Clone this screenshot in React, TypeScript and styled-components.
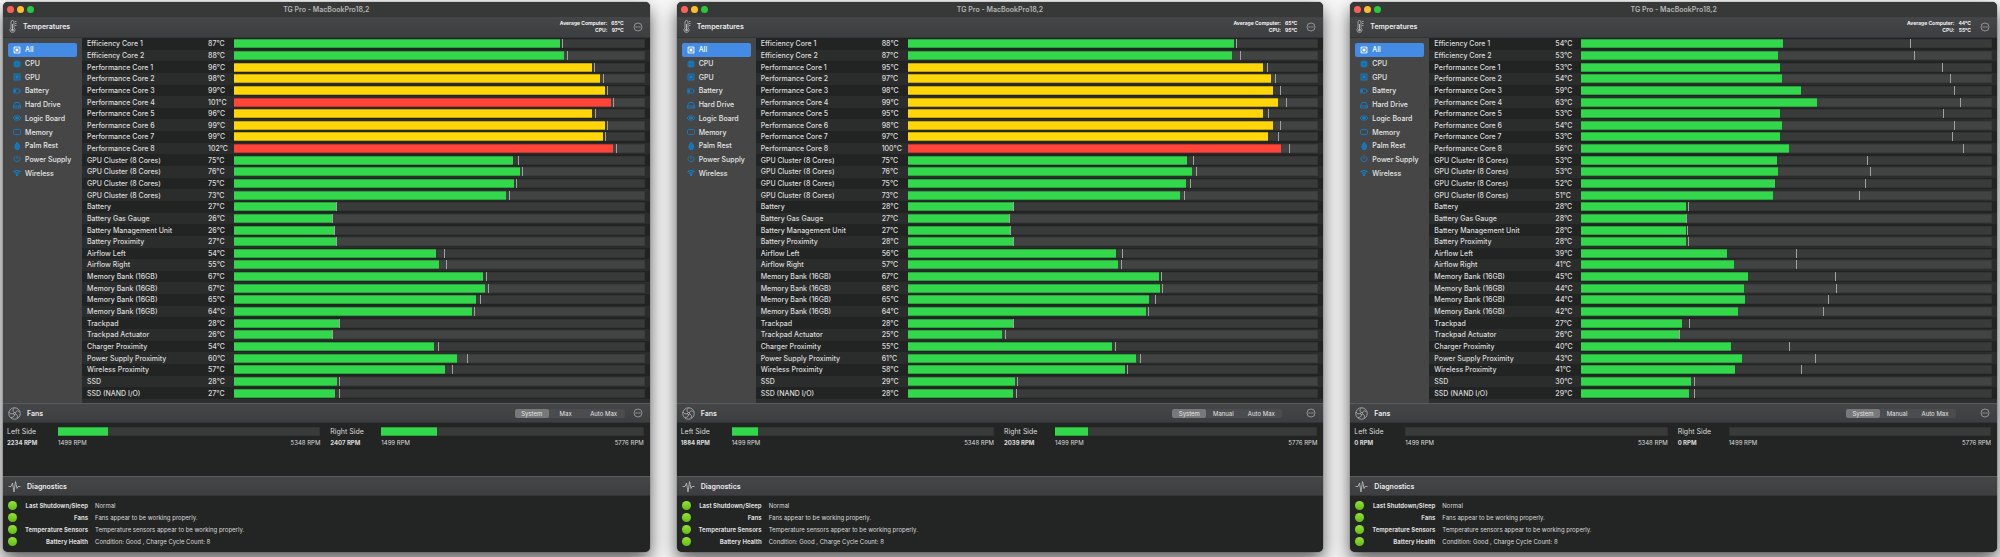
import React, { useState } from "react";
import styled, { createGlobalStyle } from "styled-components";

const GlobalStyle = createGlobalStyle`
  *, *::before, *::after { box-sizing: border-box; }
  html, body { margin: 0; padding: 0; }
  body {
    background: #f8f8f8;
    color: #dcdcdc;
    font-family: Inter, "Liberation Sans", sans-serif;
    font-size: 7px;
    line-height: 9px;
  }
  button { font: inherit; color: inherit; border: 0; padding: 0; background: none; }
`;

const TRACK_UNITS = 411;

type Reading = [temp: number, level: number, peak: number];

const SENSORS = [
  "Efficiency Core 1", "Efficiency Core 2",
  "Performance Core 1", "Performance Core 2", "Performance Core 3", "Performance Core 4",
  "Performance Core 5", "Performance Core 6", "Performance Core 7", "Performance Core 8",
  "GPU Cluster (8 Cores)", "GPU Cluster (8 Cores)", "GPU Cluster (8 Cores)", "GPU Cluster (8 Cores)",
  "Battery", "Battery Gas Gauge", "Battery Management Unit", "Battery Proximity",
  "Airflow Left", "Airflow Right",
  "Memory Bank (16GB)", "Memory Bank (16GB)", "Memory Bank (16GB)", "Memory Bank (16GB)",
  "Trackpad", "Trackpad Actuator", "Charger Proximity", "Power Supply Proximity",
  "Wireless Proximity", "SSD", "SSD (NAND I/O)",
];

interface Machine {
  average: number;
  cpu: number;
  readings: Reading[];
  left: number;
  right: number;
  modes: string[];
  wideGap: boolean;
}

const MACHINES: Machine[] = [
  {
    average: 65, cpu: 97, left: 2234, right: 2407,
    modes: ["System", "Max", "Auto Max"], wideGap: false,
    readings: [
      [87, 326, 328], [88, 330, 333], [96, 358, 360], [98, 366, 369], [99, 371, 373], [101, 377, 379],
      [96, 358, 361], [99, 371, 373], [99, 369, 371], [102, 379, 382],
      [75, 279, 284], [76, 286, 288], [75, 280, 282], [73, 272, 275],
      [27, 102, 102], [26, 98, 98], [26, 100, 100], [27, 102, 102],
      [54, 202, 210], [55, 205, 212], [67, 249, 252], [67, 251, 254], [65, 242, 246], [64, 238, 240],
      [28, 105, 105], [26, 98, 98], [54, 200, 204], [60, 223, 233], [57, 211, 218], [28, 103, 105], [27, 101, 105],
    ],
  },
  {
    average: 65, cpu: 95, left: 1884, right: 2039,
    modes: ["System", "Manual", "Auto Max"], wideGap: true,
    readings: [
      [88, 327, 329], [87, 325, 333], [95, 356, 360], [97, 364, 368], [98, 366, 373], [99, 371, 379],
      [95, 356, 361], [98, 366, 373], [97, 361, 371], [100, 374, 382],
      [75, 280, 286], [76, 285, 289], [75, 279, 283], [73, 273, 277],
      [28, 105, 105], [27, 101, 101], [27, 102, 102], [28, 105, 105],
      [56, 209, 215], [57, 211, 214], [67, 252, 254], [68, 253, 255], [65, 242, 248], [64, 239, 241],
      [28, 105, 105], [25, 94, 97], [55, 205, 208], [61, 229, 233], [58, 218, 220], [29, 107, 109], [28, 105, 108],
    ],
  },
  {
    average: 44, cpu: 55, left: 0, right: 0,
    modes: ["System", "Manual", "Auto Max"], wideGap: true,
    readings: [
      [54, 202, 329], [53, 197, 333], [53, 199, 361], [54, 201, 369], [59, 220, 373], [63, 236, 379],
      [53, 199, 362], [54, 201, 373], [53, 199, 371], [56, 208, 382],
      [53, 196, 286], [53, 197, 289], [52, 194, 284], [51, 192, 278],
      [28, 105, 107], [28, 105, 105], [28, 105, 106], [28, 105, 107],
      [39, 146, 215], [41, 153, 215], [45, 167, 254], [44, 163, 255], [44, 164, 247], [42, 157, 242],
      [27, 101, 108], [26, 98, 98], [40, 150, 208], [43, 161, 234], [41, 154, 220], [30, 110, 113], [29, 108, 113],
    ],
  },
];

const DIAGNOSTICS = [
  ["Last Shutdown/Sleep", "Normal"],
  ["Fans", "Fans appear to be working properly."],
  ["Temperature Sensors", "Temperature sensors appear to be working properly."],
  ["Battery Health", "Condition: Good , Charge Cycle Count: 8"],
];

const NAV = ["All", "CPU", "GPU", "Battery", "Hard Drive", "Logic Board", "Memory", "Palm Rest", "Power Supply", "Wireless"];

const barColor = (temp: number) => (temp >= 100 ? "#ff453a" : temp >= 95 ? "#ffd60a" : "#32d74b");

const Desktop = styled.main`
  display: grid;
  grid-template-columns: repeat(3, minmax(0, 1fr));
  column-gap: 27px;
  min-height: 100vh;
  padding: 2px 3px 5px;
`;

const AppWindow = styled.section`
  display: flex;
  flex-direction: column;
  overflow: hidden;
  border-radius: 5px;
  background: #232524;
  box-shadow: 0 0 1px #222, 0 8px 18px rgba(0, 0, 0, 0.65);
`;

const TitleBar = styled.header`
  display: grid;
  grid-template-columns: 1fr auto 1fr;
  align-items: center;
  height: 15px;
  padding: 0 4px;
  background: #373938;
`;

const Lights = styled.div`
  display: flex;
  gap: 3px;
`;

const Light = styled.button<{ $color: string }>`
  width: 7px;
  height: 7px;
  border-radius: 50%;
  background: ${(p) => p.$color};
`;

const WindowTitle = styled.h1`
  margin: 0;
  font-size: 7px;
  font-weight: 600;
  color: #b4b5b5;
`;

const SectionBar = styled.header<{ $tall?: boolean }>`
  display: flex;
  align-items: center;
  flex: none;
  height: ${(p) => (p.$tall ? 21 : 20)}px;
  padding: 0 7px ${(p) => (p.$tall ? 2 : 0)}px 5px;
  border-top: 1px solid ${(p) => (p.$tall ? "#434546" : "#5a5b5d")};
  border-bottom: 1px solid #333435;
  background: linear-gradient(#454648, #3d3e40);
`;

const SectionIcon = styled.svg<{ $wide?: boolean }>`
  flex: none;
  width: ${(p) => (p.$wide ? 13 : 10)}px;
  height: 13px;
  margin-right: ${(p) => (p.$wide ? 6 : 5)}px;
  fill: none;
  stroke: #b5b6b7;
`;

const SectionTitle = styled.h2`
  flex: 1;
  margin: 0;
  font-size: 7px;
  font-weight: 600;
  color: #ececed;
`;

const Summary = styled.dl`
  display: grid;
  grid-template-columns: auto auto;
  column-gap: 4px;
  margin: 0 9px 0 0;
  font-size: 5px;
  line-height: 7px;
  font-weight: 700;
  text-align: right;
  color: #f0f0f1;
  dd { margin: 0; }
`;

const MoreButton = styled.button`
  flex: none;
  width: 10px;
  height: 10px;
  color: #a4a5a6;
  svg { display: block; width: 10px; height: 10px; }
`;

const Body = styled.div`
  display: flex;
  flex: 1;
`;

const Sidebar = styled.nav`
  flex: none;
  width: 79px;
  padding: 5px;
  background: #464646;
`;

const NavList = styled.ul`
  display: grid;
  grid-auto-rows: 1fr;
  height: 137px;
  margin: 0;
  padding: 0;
  list-style: none;
`;

const NavButton = styled.button<{ $active: boolean }>`
  display: flex;
  align-items: center;
  gap: 4px;
  width: 100%;
  height: 100%;
  padding: 0 5px;
  border-radius: 2px;
  font-size: 7px;
  font-weight: 500;
  white-space: nowrap;
  background: ${(p) => (p.$active ? "#448be6" : "transparent")};
  color: ${(p) => (p.$active ? "#fff" : "#e6e6e6")};
  svg { width: 8px; height: 8px; flex: none; color: ${(p) => (p.$active ? "#fff" : "#0a84d8")}; }
`;

const SensorTable = styled.table`
  display: flex;
  flex: 1;
  padding-bottom: 4px;
  background: #2d2f2e;
`;

const SensorBody = styled.tbody`
  display: flex;
  flex-direction: column;
  flex: 1;
`;

const SensorRow = styled.tr`
  display: grid;
  grid-template-columns: 121px 26px 1fr;
  align-items: center;
  flex: 1 1 11px;
  padding: 0 5px;
  background: #2b2d2c;
  &:nth-child(odd) { background: #222423; }
  th, td { padding: 0; font-weight: 500; text-align: left; white-space: nowrap; }
`;

const Track = styled.div`
  position: relative;
  height: 9px;
  background: #393b3a;
  box-shadow: inset 0 0 0 1px rgba(0, 0, 0, 0.12);
  ${SensorRow}:nth-child(even) & { background: #424443; }
`;

const Fill = styled.div<{ $color: string }>`
  height: 100%;
  background: ${(p) => p.$color};
  box-shadow: inset 0 1px rgba(0, 0, 0, 0.22), inset 0 -1px rgba(0, 0, 0, 0.22);
`;

const Peak = styled.i`
  position: absolute;
  top: 0;
  bottom: 0;
  width: 1px;
  background: #a0a1a0;
`;

const FanPanel = styled.div`
  display: grid;
  grid-template-columns: 1fr 1fr;
  align-content: start;
  column-gap: 10px;
  flex: none;
  height: 53px;
  padding: 4px 6px 0 4px;
`;

const Fan = styled.div`
  display: grid;
  grid-template-columns: 51px 1fr auto;
  align-items: center;
  row-gap: 2px;
  font-size: 6px;
`;

const FanName = styled.span`
  font-size: 7px;
`;

const FanTrack = styled.div`
  grid-column: 2 / 4;
  height: 9px;
  background: #393b3a;
  box-shadow: inset 0 0 0 1px rgba(0, 0, 0, 0.12);
`;

const Modes = styled.div<{ $wideGap: boolean }>`
  display: grid;
  grid-template-columns: 34px 34px 42px;
  height: 9px;
  margin-right: ${(p) => (p.$wideGap ? 24 : 8)}px;
  border-radius: 2px;
  font-size: 6px;
  line-height: 9px;
  background: #4b4c4e;
`;

const Mode = styled.button<{ $active: boolean }>`
  border-radius: 2px;
  text-align: center;
  color: #e4e4e5;
  background: ${(p) => (p.$active ? "#77787a" : "transparent")};
`;

const DiagnosticList = styled.dl`
  display: grid;
  grid-auto-rows: 1fr;
  flex: none;
  height: 56px;
  margin: 0;
  padding: 4px 5px 5px;
  font-size: 6px;
`;

const Diagnostic = styled.div`
  display: grid;
  grid-template-columns: 9px 71px 1fr;
  align-items: center;
  dt { text-align: right; font-weight: 700; white-space: nowrap; }
  dd { margin: 0 0 0 7px; }
`;

const Dot = styled.span`
  width: 9px;
  height: 9px;
  border-radius: 50%;
  background: linear-gradient(#97e03c, #5fbf10);
`;

const RPM = styled.strong`
  font-weight: 700;
`;

function NavIcon({ name }: { name: string }) {
  const shapes: Record<string, React.ReactNode> = {
    All: <><path d="M2 5V2h12v12H2V5" /><path d="M4 2v3H2M12 2v3h2M4 14v-3H2M12 14v-3h2" strokeWidth="1" /><rect x="6" y="6" width="4" height="4" fill="currentColor" /></>,
    CPU: <><rect x="2" y="2" width="12" height="12" rx="3" fill="currentColor" fillOpacity=".45" /><rect x="5" y="5" width="6" height="6" /></>,
    GPU: <><rect x="2" y="2" width="12" height="12" fill="currentColor" fillOpacity=".3" /><rect x="6" y="6" width="4" height="4" fill="currentColor" /></>,
    Battery: <><rect x="0" y="4" width="13" height="8" rx="2" /><path d="M2 6h3v4H2z" fill="currentColor" /><path d="M15 7v2" /></>,
    "Hard Drive": <><path d="M1 10l3-7h8l3 7v4H1zM1 10h14" /><path d="M10 12h3" /></>,
    "Logic Board": <><path d="M0 8l4-4h8l4 4-4 4H4z" /><path d="M5 7h6v2H5z" fill="currentColor" /></>,
    Memory: <rect x="1" y="3" width="14" height="10" rx="2" />,
    "Palm Rest": <path d="M5 8V4h2V1h2v2h2v3h2v5l-2 4H6l-3-6z" fill="currentColor" fillOpacity=".7" />,
    "Power Supply": <path d="M8 1v7M4 3a6 6 0 1 0 8 0" />,
    Wireless: <><path d="M1 6c4-4 10-4 14 0M4 9c2-2 6-2 8 0" strokeWidth="2.4" /><path d="M8 10l2 2-2 2-2-2z" fill="currentColor" /></>,
  };
  return (
    <svg viewBox="0 0 16 16" fill="none" stroke="currentColor" strokeWidth="1.6" aria-hidden="true">
      {shapes[name]}
    </svg>
  );
}

function More({ label }: { label: string }) {
  return (
    <MoreButton aria-label={label}>
      <svg viewBox="0 0 20 20" fill="none" stroke="currentColor" strokeWidth="1.6">
        <circle cx="10" cy="10" r="8" />
        <path d="M5 10h2.6M8.7 10h2.6M12.4 10H15" strokeWidth="2" />
      </svg>
    </MoreButton>
  );
}

function FanMeter({ name, rpm, min, max }: { name: string; rpm: number; min: number; max: number }) {
  const share = Math.max(0, (rpm - min) / (max - min)) * 100;
  return (
    <Fan>
      <FanName>{name}</FanName>
      <FanTrack><Fill $color="#32d74b" style={{ width: `${share}%` }} /></FanTrack>
      <RPM>{rpm} RPM</RPM>
      <span>{min} RPM</span>
      <span>{max} RPM</span>
    </Fan>
  );
}

function MonitorWindow({ machine }: { machine: Machine }) {
  const [section, setSection] = useState("All");
  const [mode, setMode] = useState("System");
  return (
    <AppWindow>
      <TitleBar>
        <Lights>
          <Light $color="#ff5f57" aria-label="Close" />
          <Light $color="#febc2e" aria-label="Minimize" />
          <Light $color="#28c840" aria-label="Zoom" />
        </Lights>
        <WindowTitle>TG Pro - MacBookPro18,2</WindowTitle>
      </TitleBar>

      <SectionBar $tall>
        <SectionIcon viewBox="0 0 20 26" strokeWidth="1.6">
          <path d="M6 16V4a3 3 0 0 1 6 0v12a5 5 0 1 1-6 0z" />
          <path d="M9 8v12" strokeWidth="2" />
          <path d="M14 3h3M14 7h3M14 11h3" />
          <circle cx="9" cy="20" r="2" fill="#b5b6b7" />
        </SectionIcon>
        <SectionTitle>Temperatures</SectionTitle>
        <Summary>
          <dt>Average Computer:</dt><dd>{machine.average}°C</dd>
          <dt>CPU:</dt><dd>{machine.cpu}°C</dd>
        </Summary>
        <More label="Temperature options" />
      </SectionBar>

      <Body>
        <Sidebar aria-label="Sensor groups">
          <NavList>
            {NAV.map((name) => (
              <li key={name}>
                <NavButton $active={name === section} onClick={() => setSection(name)}>
                  <NavIcon name={name} />
                  {name}
                </NavButton>
              </li>
            ))}
          </NavList>
        </Sidebar>
        <SensorTable>
          <SensorBody>
            {machine.readings.map(([temp, level, peak], i) => (
              <SensorRow key={i}>
                <th scope="row">{SENSORS[i]}</th>
                <td>{temp}°C</td>
                <td>
                  <Track>
                    <Fill $color={barColor(temp)} style={{ width: `${(level / TRACK_UNITS) * 100}%` }} />
                    <Peak style={{ left: `${(peak / TRACK_UNITS) * 100}%` }} />
                  </Track>
                </td>
              </SensorRow>
            ))}
          </SensorBody>
        </SensorTable>
      </Body>

      <SectionBar>
        <SectionIcon $wide viewBox="0 0 26 26" strokeWidth="1.6">
          <circle cx="13" cy="13" r="11.5" />
          <circle cx="13" cy="13" r="2" />
          <path d="M13 11C9 9 9 5 13 2M15 12c1-5 5-5 8-2M15 14c4 1 5 5 3 8M13 15c0 5-4 6-7 6M11 13c-4 2-8 0-9-3" />
        </SectionIcon>
        <SectionTitle>Fans</SectionTitle>
        <Modes $wideGap={machine.wideGap}>
          {machine.modes.map((name) => (
            <Mode key={name} $active={name === mode} onClick={() => setMode(name)}>{name}</Mode>
          ))}
        </Modes>
        <More label="Fan options" />
      </SectionBar>
      <FanPanel>
        <FanMeter name="Left Side" rpm={machine.left} min={1499} max={5348} />
        <FanMeter name="Right Side" rpm={machine.right} min={1499} max={5776} />
      </FanPanel>

      <SectionBar>
        <SectionIcon $wide viewBox="0 0 26 26" strokeWidth="1.8">
          <path d="M1 13h5l3-7 3 18 3-21 3 14 2-4h5" />
        </SectionIcon>
        <SectionTitle>Diagnostics</SectionTitle>
      </SectionBar>
      <DiagnosticList>
        {DIAGNOSTICS.map(([name, value]) => (
          <Diagnostic key={name}>
            <Dot />
            <dt>{name}</dt>
            <dd>{value}</dd>
          </Diagnostic>
        ))}
      </DiagnosticList>
    </AppWindow>
  );
}

export default function App() {
  return (
    <>
      <GlobalStyle />
      <Desktop>
        {MACHINES.map((machine, i) => (
          <MonitorWindow key={i} machine={machine} />
        ))}
      </Desktop>
    </>
  );
}
